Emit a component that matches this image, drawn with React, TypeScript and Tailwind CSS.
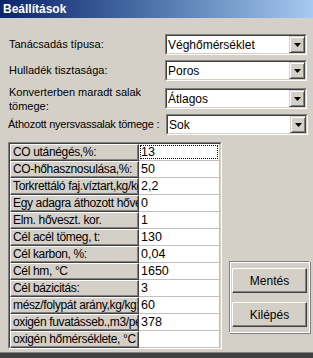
import React from "react";

const rows: [string, string][] = [
  ["CO utánégés,%:", "13"],
  ["CO-hőhasznosulása,%:", "50"],
  ["Torkrettáló faj.víztart,kg/kg:", "2,2"],
  ["Egy adagra áthozott hőveszteség", "0"],
  ["Elm. hőveszt. kor.", "1"],
  ["Cél acél tömeg, t:", "130"],
  ["Cél karbon, %:", "0,04"],
  ["Cél hm, °C", "1650"],
  ["Cél bázicitás:", "3"],
  ["mész/folypát arány,kg/kg:", "60"],
  ["oxigén fuvatásseb.,m3/perc", "378"],
  ["oxigén hőmérséklete, °C", ""],
];

function Combo({ value, className }: { value: string; className?: string }) {
  return (
    <div
      className={`flex h-[21px] w-[142px] shrink-0 border border-t-[#808080] border-l-[#808080] border-b-white border-r-white ${className ?? ""}`}
    >
      <div className="flex flex-1 items-center border border-t-[#404040] border-l-[#404040] border-b-[#d4d0c8] border-r-[#d4d0c8] bg-white">
        <span className="flex-1 pl-[1px] text-[12px] leading-none text-black">{value}</span>
        <div className="flex h-[17px] w-[16px] items-center justify-center border border-t-[#d4d0c8] border-l-[#d4d0c8] border-b-[#404040] border-r-[#404040] bg-[#d4d0c8] shadow-[inset_1px_1px_0_#fff,inset_-1px_-1px_0_#808080]">
          <svg width="7" height="4" viewBox="0 0 7 4">
            <path d="M0 0h7L3.5 4z" fill="#000" />
          </svg>
        </div>
      </div>
    </div>
  );
}

function Button({ label }: { label: string }) {
  return (
    <div className="flex h-[25px] w-[75px] items-center justify-center border border-t-white border-l-white border-b-[#404040] border-r-[#404040] bg-[#d4d0c8] text-[12px] text-black shadow-[inset_-1px_-1px_0_#808080]">
      {label}
    </div>
  );
}

export default function App() {
  return (
    <div
      className="flex h-[358px] w-[313px] flex-col overflow-hidden bg-[#d4d0c8] text-black"
      style={{ fontFamily: '"Liberation Sans", Arial, sans-serif' }}
    >
      <div className="flex h-[18px] items-center bg-gradient-to-r from-[#0a246a] to-[#a6caf0] pl-[3px] text-[12px] font-bold text-white">
        Beállítások
      </div>

      <div className="flex flex-1 flex-col">
        <div className="mt-[16px] flex h-[21px] items-center">
          <span className="w-[165px] shrink-0 pl-[9px] text-[11px]">Tanácsadás típusa:</span>
          <Combo value="Véghőmérséklet" />
        </div>
        <div className="mt-[5px] flex h-[21px] items-center">
          <span className="w-[165px] shrink-0 pl-[9px] text-[11px]">Hulladék tisztasága:</span>
          <Combo value="Poros" />
        </div>
        <div className="mt-[7px] flex h-[21px] items-center">
          <span className="w-[165px] shrink-0 pl-[9px] text-[11px] leading-[14px]">
            Konverterben maradt salak
            <br />
            tömege:
          </span>
          <Combo value="Átlagos" />
        </div>
        <div className="mt-[5px] flex h-[21px] items-center">
          <span className="w-[166px] shrink-0 whitespace-nowrap pl-[8px] text-[11px] tracking-[-0.25px]">
            Áthozott nyersvassalak tömege :
          </span>
          <Combo value="Sok" className="w-[141px]" />
        </div>

        <div className="mt-[7px] flex">
          <div className="ml-[8px] h-[207px] w-[214px] overflow-hidden border border-t-[#808080] border-l-[#808080] border-b-white border-r-white">
            <div className="h-full border border-t-[#404040] border-l-[#404040] border-b-[#d4d0c8] border-r-[#d4d0c8] bg-[#d4d0c8]">
              {rows.map(([label, value], i) => (
                <div key={i} className="flex h-[17px]">
                  <div className="h-[17px] w-[129px] overflow-hidden whitespace-nowrap border border-t-white border-l-white border-b-[#404040] border-r-[#404040] pl-[2px] text-[12px] leading-[14px] tracking-[-0.35px] shadow-[inset_-1px_-1px_0_#808080]">
                    {label}
                  </div>
                  <div className="h-[17px] w-[81px] overflow-hidden border-b border-r border-[#c0c0c0] bg-white p-[1px] text-[12.5px] leading-[14px]">
                    <div className={`h-full pl-[1px] ${i === 0 ? "outline-1 outline-dotted outline-black -outline-offset-1" : ""}`}>
                      {value}
                    </div>
                  </div>
                </div>
              ))}
            </div>
          </div>

          <div className="ml-[7px] mt-[119px] h-[72px] w-[81px] border border-t-[#808080] border-l-[#808080] border-b-white border-r-white shadow-[inset_1px_1px_0_#fff,1px_1px_0_#808080]">
            <div className="flex flex-col gap-[9px] pl-[2px] pt-[6px]">
              <Button label="Mentés" />
              <Button label="Kilépés" />
            </div>
          </div>
        </div>
      </div>

      <div className="h-[6px] border-t border-[#808080] bg-[#404040]" />
    </div>
  );
}
